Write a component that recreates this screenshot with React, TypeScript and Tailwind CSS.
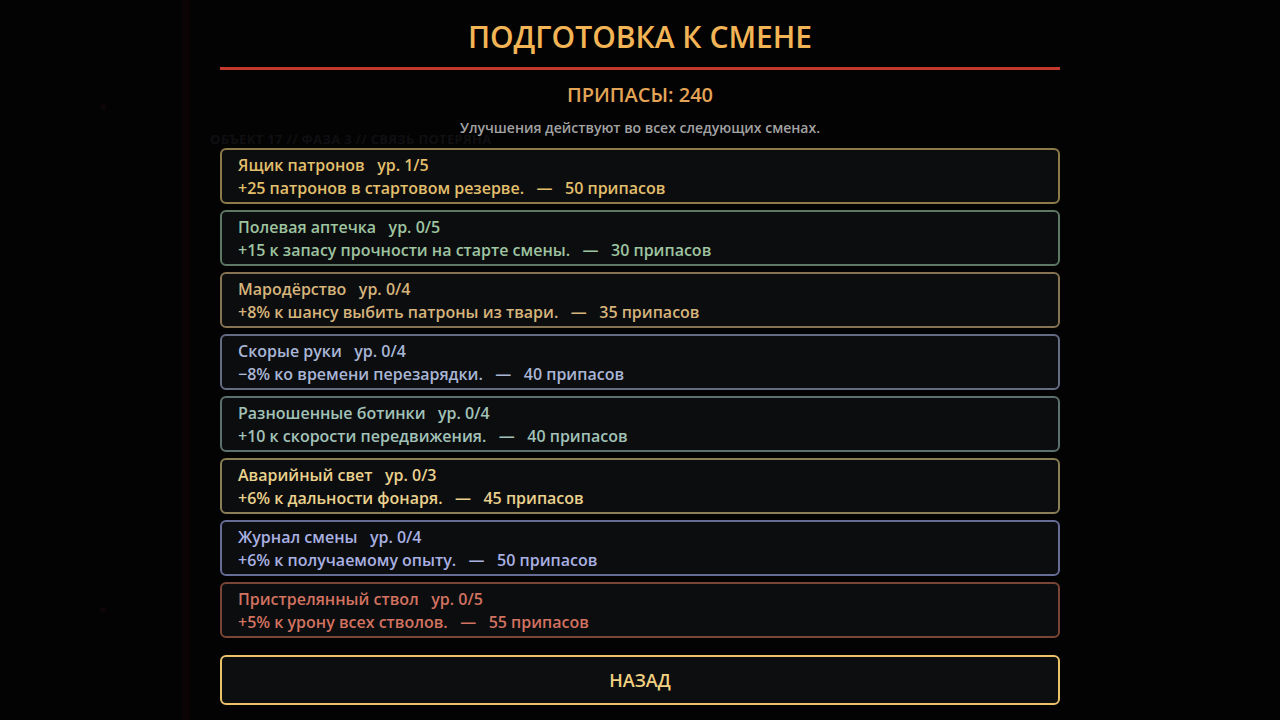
const UPGRADES = [
  { name: 'Ящик патронов', level: '1/5', desc: '+25 патронов в стартовом резерве.', cost: 50, border: 'border-[#8c7a48]', text: 'text-[#e2bf6c]' },
  { name: 'Полевая аптечка', level: '0/5', desc: '+15 к запасу прочности на старте смены.', cost: 30, border: 'border-[#5e7866]', text: 'text-[#9ec4a0]' },
  { name: 'Мародёрство', level: '0/4', desc: '+8% к шансу выбить патроны из твари.', cost: 35, border: 'border-[#857354]', text: 'text-[#d6b47c]' },
  { name: 'Скорые руки', level: '0/4', desc: '−8% ко времени перезарядки.', cost: 40, border: 'border-[#646c84]', text: 'text-[#a9b6d6]' },
  { name: 'Разношенные ботинки', level: '0/4', desc: '+10 к скорости передвижения.', cost: 40, border: 'border-[#5c706e]', text: 'text-[#a2c2b8]' },
  { name: 'Аварийный свет', level: '0/3', desc: '+6% к дальности фонаря.', cost: 45, border: 'border-[#8a7e54]', text: 'text-[#ead28e]' },
  { name: 'Журнал смены', level: '0/4', desc: '+6% к получаемому опыту.', cost: 50, border: 'border-[#666c94]', text: 'text-[#a9b1e2]' },
  { name: 'Пристрелянный ствол', level: '0/5', desc: '+5% к урону всех стволов.', cost: 55, border: 'border-[#7a4436]', text: 'text-[#d27260]' },
];

function UpgradeCard({ u }: { u: (typeof UPGRADES)[number] }) {
  return (
    <button
      className={`h-[56px] w-full rounded-[6px] border-2 ${u.border} bg-[#0c0d0f] px-4 pt-[2px] flex flex-col justify-center text-left font-semibold text-[16px] leading-[23px] ${u.text}`}
    >
      <span className="whitespace-pre">{`${u.name}   ур. ${u.level}`}</span>
      <span className="whitespace-pre">{`${u.desc}   —   ${u.cost} припасов`}</span>
    </button>
  );
}

export default function App() {
  return (
    <div
      className="relative h-[720px] w-full overflow-hidden bg-[#030304]"
      style={{ fontFamily: '"Open Sans", "Noto Sans", sans-serif' }}
    >
      {/* faint game scene behind the overlay */}
      <div className="pointer-events-none absolute inset-0">
        <div className="absolute left-[182px] top-0 h-full w-[8px] bg-[#0a0405]" />
        <div className="absolute left-[210px] top-[130px] text-[13px] font-bold tracking-wide text-[#0f0f11]">
          ОБЪЕКТ 17 // ФАЗА 3 // СВЯЗЬ ПОТЕРЯНА
        </div>
        <div className="absolute left-[100px] top-[104px] h-[6px] w-[6px] rounded-full bg-[#0e0606]" />
        <div className="absolute left-[100px] top-[607px] h-[6px] w-[6px] rounded-full bg-[#0e0606]" />
      </div>

      <div className="relative mx-auto flex w-[840px] flex-col items-center pt-[17px]">
        <h1 className="text-[30px] font-semibold leading-[40px] text-[#f2b455]">ПОДГОТОВКА К СМЕНЕ</h1>
        <div className="mt-[10px] h-[3px] w-full bg-[#c23a2c]" />
        <div className="mt-[11px] text-[20px] font-semibold leading-[28px] text-[#e4a456]">ПРИПАСЫ: 240</div>
        <p className="mt-[9px] text-[14px] font-semibold leading-[20px] text-[#a2a2a2]">
          Улучшения действуют во всех следующих сменах.
        </p>

        <div className="mt-[10px] flex w-full flex-col gap-[6px]">
          {UPGRADES.map((u) => (
            <UpgradeCard key={u.name} u={u} />
          ))}
        </div>

        <button className="mt-[17px] h-[50px] w-full rounded-[6px] border-2 border-[#e9c26a] bg-[#0c0e10] text-[18px] font-semibold text-[#f2d282]">
          НАЗАД
        </button>
      </div>
    </div>
  );
}
